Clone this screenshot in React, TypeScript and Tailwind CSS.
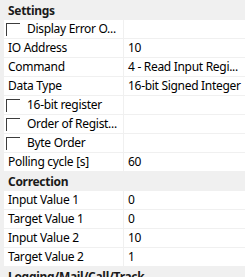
import React from "react";

type Row =
  | { kind: "header"; label: string }
  | { kind: "prop"; label: string; value?: string; check?: boolean };

const rows: Row[] = [
  { kind: "header", label: "Settings" },
  { kind: "prop", label: "Display Error O...", check: true },
  { kind: "prop", label: "IO Address", value: "10" },
  { kind: "prop", label: "Command", value: "4 - Read Input Regi..." },
  { kind: "prop", label: "Data Type", value: "16-bit Signed Integer" },
  { kind: "prop", label: "16-bit register", check: true },
  { kind: "prop", label: "Order of Regist...", check: true },
  { kind: "prop", label: "Byte Order", check: true },
  { kind: "prop", label: "Polling cycle [s]", value: "60" },
  { kind: "header", label: "Correction" },
  { kind: "prop", label: "Input Value 1", value: "0" },
  { kind: "prop", label: "Target Value 1", value: "0" },
  { kind: "prop", label: "Input Value 2", value: "10" },
  { kind: "prop", label: "Target Value 2", value: "1" },
  { kind: "header", label: "Logging/Mail/Call/Track" },
];

function Checkbox() {
  return <div className="w-[14px] h-[13px] border-t border-l border-[#3c3c3c] shrink-0" />;
}

export default function App() {
  return (
    <div
      className="w-[245px] h-[277px] overflow-hidden bg-[#f0f0f0] text-[12px] tracking-[-0.3px] text-black flex flex-col"
      style={{ fontFamily: '"Noto Sans", "Open Sans", sans-serif' }}
    >
      {rows.map((r, i) => {
        if (r.kind === "header") {
          return (
            <div
              key={i}
              className={`${i === 0 ? "h-[20px] pt-px" : "h-[19px]"} shrink-0 flex items-center pl-[8px] font-bold text-[#1a1a1a] whitespace-nowrap`}
            >
              {r.label}
            </div>
          );
        }
        return (
          <div key={i} className="h-[19px] shrink-0 flex pl-[4px] pb-px gap-px">
            <div className="w-[119px] bg-white flex items-center overflow-hidden whitespace-nowrap">
              {r.check ? (
                <div className="flex items-center pl-[2px]">
                  <Checkbox />
                  <span className="pl-[7px]">{r.label}</span>
                </div>
              ) : (
                <span className="pl-[4px]">{r.label}</span>
              )}
            </div>
            <div className="flex-1 bg-white flex items-center overflow-hidden whitespace-nowrap pl-[4px]">
              {r.value ?? ""}
            </div>
          </div>
        );
      })}
    </div>
  );
}
